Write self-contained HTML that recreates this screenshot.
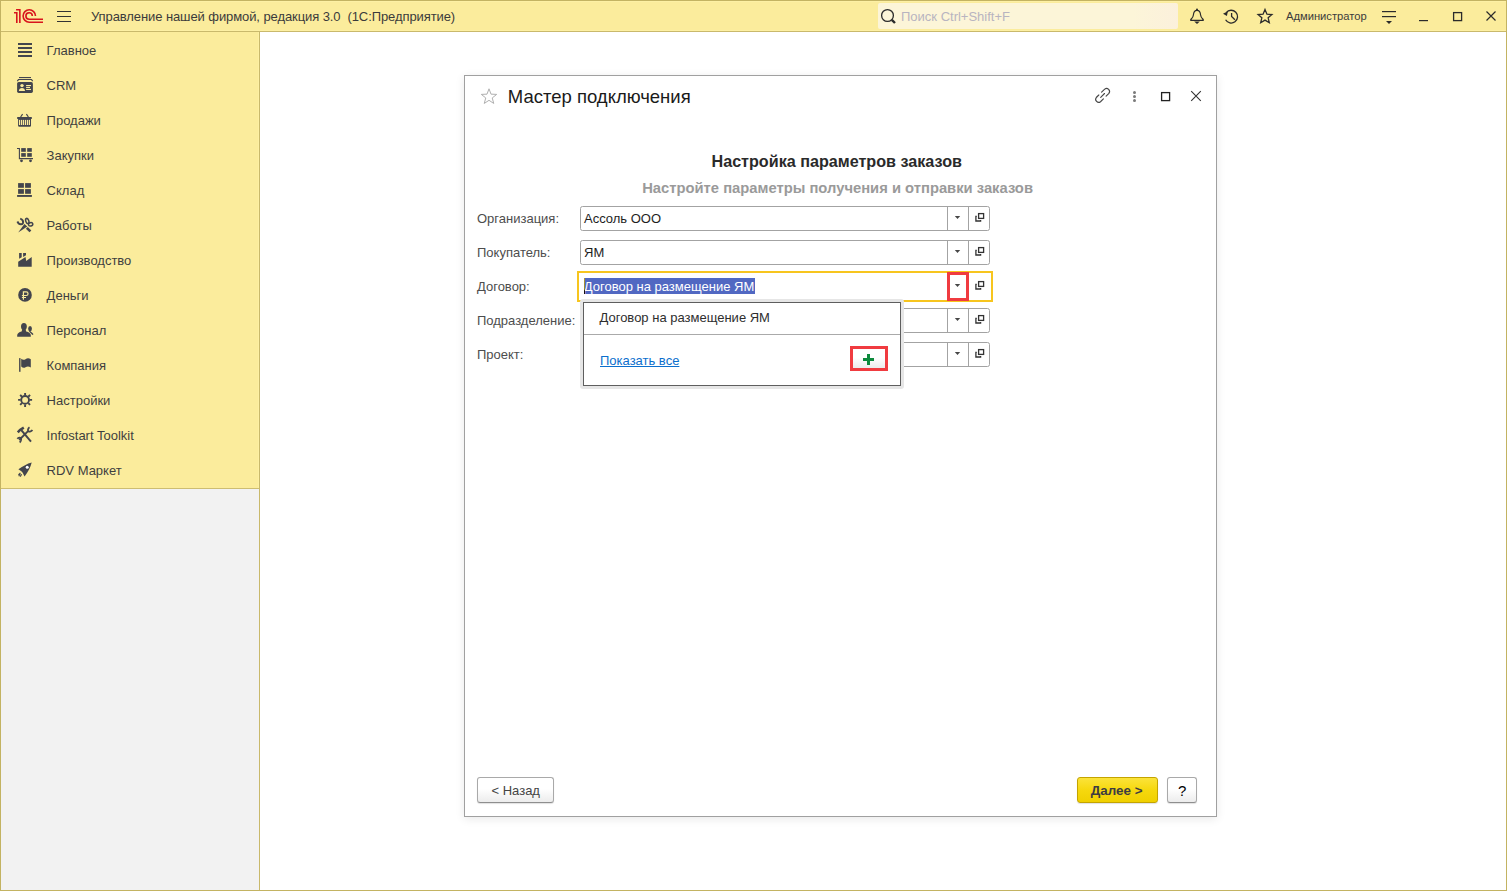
<!DOCTYPE html>
<html><head><meta charset="utf-8">
<style>
*{box-sizing:border-box;margin:0;padding:0}
html,body{width:1507px;height:891px;overflow:hidden;background:#fff}
body{font-family:"Liberation Sans",sans-serif;font-size:13px;color:#333;position:relative}
.abs{position:absolute}
.t{position:absolute;white-space:pre;line-height:15px}
#frame{position:absolute;left:0;top:0;width:1507px;height:891px;border:1px solid #c3b362;pointer-events:none;z-index:50}
#hdr{position:absolute;left:0;top:0;width:1507px;height:32px;background:#fbec9c;border-bottom:1px solid #c9b96c}
#side{position:absolute;left:0;top:32px;width:260px;height:859px;background:#f2f2f2;border-right:1px solid #c9b96c}
#sideY{position:absolute;left:0;top:0;width:259px;height:457px;background:#fbec9c;border-bottom:1px solid #cdbd72}
.si{position:absolute;left:46.6px;color:#3f3f3f;font-size:13px;line-height:15px;white-space:pre}
.ic{position:absolute;left:14px;width:22px;height:22px}
#dlg{position:absolute;left:464px;top:75px;width:753px;height:742px;background:#fff;border:1px solid #a0a0a0;box-shadow:0 2px 9px rgba(0,0,0,0.09)}
.lbl{position:absolute;left:477px;color:#4d4d4d;font-size:13px;line-height:15px;white-space:pre}
.inp{position:absolute;left:580px;width:410px;height:25px;border:1px solid #a3a3a3;border-radius:2.5px;background:#fff}
.inp .d1{position:absolute;left:366px;top:0;width:1px;height:23px;background:#a3a3a3}
.inp .d2{position:absolute;left:387px;top:0;width:1px;height:23px;background:#a3a3a3}
.arr{position:absolute;width:0;height:0;border-left:3px solid transparent;border-right:3px solid transparent;border-top:3px solid #4a4a4a}
.btn{position:absolute;height:26px;border:1px solid #a9a9a9;border-bottom-color:#8e8e8e;border-radius:3px;background:linear-gradient(#fff 0%,#fff 45%,#ececec 100%);box-shadow:0 1px 1px rgba(0,0,0,0.12)}
</style></head>
<body>
<div id="hdr"></div>
<!-- header content -->
<div class="abs" style="left:1px;top:1px;width:1505px;height:1px;background:#fdf0a4"></div>
<div class="abs" style="left:1px;top:30px;width:1505px;height:1px;background:#fdf0a4"></div>
<div class="abs" style="left:878px;top:3px;width:300px;height:26px;background:linear-gradient(90deg,#fcf5d8 0%,#fcf5d8 85%,#fbf0dc 100%);border-radius:2px"></div>
<div class="t" style="left:91px;top:9px;color:#3b3b3b;font-size:13px;letter-spacing:-0.09px">Управление нашей фирмой, редакция 3.0  (1С:Предприятие)</div>
<div class="t" style="left:901px;top:9px;color:#b8b4c0;font-size:13px">Поиск Ctrl+Shift+F</div>
<div class="t" style="left:1286px;top:9px;color:#3b3b3b;font-size:11.2px">Администратор</div>
<svg class="abs" style="left:0;top:0;z-index:5" width="1507" height="32" viewBox="0 0 1507 32">
 <g fill="none" stroke="#d8141c" stroke-width="1.6">
  <path d="M14,12.75 H16.8 V23"/>
  <path d="M16.05,9.75 H19.85 V23"/>
  <path d="M35.5,15.9 A6.2,6.2 0 1 0 29.3,22.2 H43"/>
  <path d="M32.34,15.9 A3.22,3.22 0 1 0 29.12,19.2 H43"/>
 </g>
 <g fill="#333">
  <rect x="57" y="11" width="14" height="1"/><rect x="57" y="16" width="14" height="1"/><rect x="57" y="21" width="14" height="1"/>
 </g>
 <g fill="none" stroke="#2b2b2b">
  <circle cx="887.5" cy="15.5" r="5.9" stroke-width="1.3"/>
  <path d="M891.8,19.8 L895,23" stroke-width="2.4"/>
 </g>
 <!-- bell -->
 <g stroke="#2b2b2b" stroke-width="1.2" fill="none">
  <path d="M1197,10.4 C1194.3,10.4 1193.6,12.5 1193.4,15 C1193.1,17.6 1191.6,18.6 1190.8,19.5 C1190.4,20 1190.7,20.4 1191.3,20.4 H1202.7 C1203.3,20.4 1203.6,20 1203.2,19.5 C1202.4,18.6 1200.9,17.6 1200.6,15 C1200.4,12.5 1199.7,10.4 1197,10.4 Z"/>
 </g>
 <g fill="#2b2b2b">
  <circle cx="1197" cy="9.6" r="1"/>
  <path d="M1194.2,21.6 H1199.8 L1197,23.9 Z"/>
 </g>
 <!-- history -->
 <g stroke="#2b2b2b" stroke-width="1.3" fill="none">
  <path d="M1225.6,19.8 A6.4,6.4 0 1 0 1226.2,12.6"/>
  <path d="M1231.6,13 V16.4 L1234.9,19.7"/>
 </g>
 <path d="M1223,13.7 L1227.9,11.2 L1226.9,16.1 Z" fill="#2b2b2b"/>
 <!-- star -->
 <path d="M1265.00,9.50 L1266.94,14.13 L1271.94,14.54 L1268.14,17.82 L1269.29,22.71 L1265.00,20.10 L1260.71,22.71 L1261.86,17.82 L1258.06,14.54 L1263.06,14.13 Z" fill="none" stroke="#2b2b2b" stroke-width="1.3" stroke-linejoin="miter"/>
 <!-- filter -->
 <g fill="#2b2b2b">
  <rect x="1382" y="11" width="14" height="1.2"/><rect x="1382" y="16" width="14" height="1.2"/>
  <path d="M1386,21 H1392 L1389,24 Z"/>
  <rect x="1419" y="20" width="9" height="1.2"/>
 </g>
 <rect x="1453.6" y="12.6" width="8" height="8" fill="none" stroke="#2b2b2b" stroke-width="1.3"/>
 <path d="M1486.5,11.5 L1495.5,20.5 M1495.5,11.5 L1486.5,20.5" stroke="#2b2b2b" stroke-width="1.2"/>
</svg>
<div id="side"><div id="sideY"></div></div>
<div class="abs" style="left:258px;top:32px;width:1px;height:456px;background:#fdf0a4"></div>
<div class="si" style="top:43px">Главное</div>
<div class="si" style="top:78px">CRM</div>
<div class="si" style="top:113px">Продажи</div>
<div class="si" style="top:148px">Закупки</div>
<div class="si" style="top:183px">Склад</div>
<div class="si" style="top:218px">Работы</div>
<div class="si" style="top:253px">Производство</div>
<div class="si" style="top:288px">Деньги</div>
<div class="si" style="top:323px">Персонал</div>
<div class="si" style="top:358px">Компания</div>
<div class="si" style="top:393px">Настройки</div>
<div class="si" style="top:428px">Infostart Toolkit</div>
<div class="si" style="top:463px">RDV Маркет</div>
<svg class="abs" style="left:0;top:0;z-index:5" width="40" height="490" viewBox="0 0 40 490">
 <g fill="#43454d">
  <!-- main -->
  <rect x="18" y="43" width="14" height="2"/><rect x="18" y="47" width="14" height="2"/><rect x="18" y="51" width="14" height="2"/><rect x="18" y="55" width="14" height="2"/>
  <!-- crm -->
  <rect x="19" y="77" width="12" height="1.1"/>
  <rect x="17.1" y="82.1" width="15.8" height="10.8" rx="1.6"/>
 </g>
 <path d="M17.3,81.1 L18.5,79.55 H31.5 L32.7,81.1" fill="none" stroke="#43454d" stroke-width="1.1"/>
 <g fill="#fbec9c">
  <circle cx="22" cy="85.6" r="1.7"/>
  <path d="M18.9,91 C18.9,89 20.3,87.9 22,87.9 C23.7,87.9 25,89 25,91 Z"/>
  <rect x="26.1" y="85" width="4.9" height="1.1"/><rect x="26.1" y="86.9" width="3.9" height="1.1"/><rect x="26.1" y="88.9" width="4.9" height="1.1"/>
 </g>
 <!-- basket -->
 <g fill="#43454d">
  <rect x="17.2" y="117" width="14.6" height="2"/>
  <path d="M18.1,119 H31 V125.6 Q31,126.8 29.8,126.8 H19.3 Q18.1,126.8 18.1,125.6 Z"/>
 </g>
 <g fill="#fbec9c">
  <rect x="19" y="119.9" width="1.2" height="5.1"/><rect x="21" y="119.9" width="1.2" height="5.1"/><rect x="22.9" y="119.9" width="1.2" height="5.1"/><rect x="24.9" y="119.9" width="1.2" height="5.1"/><rect x="26.9" y="119.9" width="1.2" height="5.1"/><rect x="28.8" y="119.9" width="1.2" height="5.1"/>
 </g>
 <path d="M20.6,117 L22.6,114.2 M26.4,114.2 L28.4,117" stroke="#43454d" stroke-width="1.2" fill="none"/>
 <!-- cart -->
 <path d="M17,148.5 H19.4 V158.6 H33" fill="none" stroke="#43454d" stroke-width="1.1"/>
 <g fill="#43454d">
  <rect x="21.2" y="148.1" width="4.6" height="3.7"/><rect x="27.2" y="148.1" width="4.6" height="3.7"/>
  <rect x="21.2" y="153.1" width="4.6" height="3.7"/><rect x="27.2" y="153.1" width="4.6" height="3.7"/>
  <circle cx="21.5" cy="160.8" r="1.4"/><circle cx="30.5" cy="160.8" r="1.4"/>
 </g>
 <!-- sklad -->
 <g fill="#43454d">
  <rect x="18.1" y="183.1" width="5.8" height="4.7"/><rect x="25.1" y="183.1" width="5.8" height="4.7"/>
  <rect x="18.1" y="189.1" width="5.8" height="4.7"/><rect x="25.1" y="189.1" width="5.8" height="4.7"/>
  <rect x="17.1" y="195" width="14.8" height="1.9"/>
 </g>
 <!-- raboty -->
 <g fill="none" stroke="#43454d" stroke-width="2">
  <path d="M20.2,218.6 C22.6,219.4 23.6,221.5 22.9,223.2 C22.1,224.6 19.8,224.5 18.4,223.2 L17.4,221.4"/>
 </g>
 <g fill="none" stroke="#43454d" stroke-width="1.5">
  <ellipse cx="27.3" cy="220.9" rx="1.5" ry="2.6" transform="rotate(-20 27.3 220.9)"/>
  <ellipse cx="30.6" cy="224.3" rx="2.2" ry="1.7" transform="rotate(-15 30.6 224.3)"/>
  <path d="M26.8,227.8 L30.4,231.4" stroke-width="2.6"/>
 </g>
 <path d="M24.4,224.1 L27.3,226.6 L18.2,232.5 Z" fill="#43454d"/>
 <!-- proizvodstvo -->
 <g fill="#43454d">
  <path d="M19.1,253.1 H21.7 V257.3 L19.1,258.8 Z"/>
  <path d="M23.1,253.1 H26 V255.2 L23.1,256.9 Z"/>
  <path d="M18.2,261.8 L25.5,257.1 L26.2,261.1 L31.7,257.1 V266.7 H18.2 Z"/>
 </g>
 <!-- dengi -->
 <circle cx="25" cy="294.9" r="6.8" fill="#43454d"/>
 <path d="M23.4,299.8 V291.8 H26.2 A1.85,1.85 0 0 1 26.2,295.5 H21.9 M21.9,297.5 H26" fill="none" stroke="#fbec9c" stroke-width="1.2"/>
 <!-- personal -->
 <g fill="#43454d">
  <ellipse cx="23.9" cy="326.5" rx="2.9" ry="3.5"/>
  <path d="M22.3,329 H25.5 L26.2,331.6 C29,332.3 30.8,333.4 30.8,335.2 V336.7 H17.2 V335.2 C17.2,333.4 19,332.3 21.6,331.6 Z"/>
  <ellipse cx="30.05" cy="328.7" rx="1.9" ry="2.65"/>
 </g>
 <path d="M29.6,331 C30.2,332.4 32,333 32.9,334.6" fill="none" stroke="#43454d" stroke-width="1.4"/>
 <!-- kompaniya -->
 <g fill="#43454d">
  <rect x="19.1" y="358.1" width="1.4" height="13.7"/>
  <path d="M21.2,358.8 Q23.3,360.6 25.5,359.2 Q28,357.4 30.8,359.2 V367.5 Q28,365.8 25.5,367.3 Q23.3,368.6 21.2,366.6 Z"/>
 </g>
 <!-- nastroiki -->
 <circle cx="25.1" cy="399.9" r="3.9" fill="none" stroke="#43454d" stroke-width="1.9"/>
 <path d="M29.60,399.90 L32.10,399.90 M28.28,403.08 L30.05,404.85 M25.10,404.40 L25.10,406.90 M21.92,403.08 L20.15,404.85 M20.60,399.90 L18.10,399.90 M21.92,396.72 L20.15,394.95 M25.10,395.40 L25.10,392.90 M28.28,396.72 L30.05,394.95" stroke="#43454d" stroke-width="1.9"/>
 <!-- toolkit -->
 <g fill="none" stroke="#43454d" stroke-width="1.8">
  <path d="M21.3,430.2 L31,441.6" stroke-width="2"/>
  <path d="M17.8,432.4 L20,429.9 L23.8,427.6" stroke-width="2.5"/>
  <path d="M19.2,440 L28,431.2"/>
  <path d="M29.5,427.3 C27.8,428.4 27.6,430.6 28.4,431.2 C29.4,432 31.6,431.5 32.3,429.9"/>
  <path d="M17.3,438.8 C18.6,437.2 20.4,437.2 20.9,438.3 C21.5,439.6 20.8,441.7 19.6,442.4"/>
 </g>
 <!-- rdv -->
 <path d="M31.7,462.4 C27,463.6 23.2,466 18.4,469.3 L21.3,471.3 L22.5,472.5 L24.6,476.4 C28.1,471.6 30.6,467.2 31.7,462.4 Z" fill="#43454d"/>
 <circle cx="27.2" cy="467.3" r="1.5" fill="#fff"/>
 <path d="M18.8,476.3 L20.2,473.4 M20.2,476.6 L21.6,474.2 M18.4,474.8 L20.4,472.8" stroke="#43454d" stroke-width="1.1"/>
</svg>
<div id="dlg"></div>
<!-- dialog header -->
<div class="t" style="left:507.8px;top:85.6px;font-size:18.5px;line-height:22px;color:#1a1a1a">Мастер подключения</div>
<svg class="abs" style="left:460px;top:80px;z-index:5" width="760" height="30" viewBox="460 80 760 30">
 <path d="M489.00,88.80 L491.00,94.15 L496.70,94.40 L492.23,97.95 L493.76,103.45 L489.00,100.30 L484.24,103.45 L485.77,97.95 L481.30,94.40 L487.00,94.15 Z" fill="none" stroke="#b0b0b0" stroke-width="1"/>
 <g fill="none" stroke="#474747" stroke-width="1.15" stroke-linecap="round">
  <path d="M1101.6,92.2 L1104.7,89.1 A3,3 0 0 1 1108.9,93.3 L1106.1,96.1"/>
  <path d="M1103.4,98.8 L1100.5,101.7 A3,3 0 0 1 1096.3,97.5 L1098.8,95"/>
  <path d="M1100.7,97.3 L1104.5,93.5"/>
 </g>
 <g fill="#7a7a7a"><circle cx="1134.5" cy="92.6" r="1.5"/><circle cx="1134.5" cy="96.6" r="1.5"/><circle cx="1134.5" cy="100.5" r="1.5"/></g>
 <rect x="1161.6" y="92.6" width="8" height="8" fill="none" stroke="#222" stroke-width="1.3"/>
 <path d="M1191.2,91.2 L1200.8,100.8 M1200.8,91.2 L1191.2,100.8" stroke="#333" stroke-width="1.1"/>
</svg>
<div class="t" style="left:711.5px;top:152.2px;font-size:16.15px;line-height:18px;font-weight:bold;color:#2a2a2a">Настройка параметров заказов</div>
<div class="t" style="left:642.2px;top:180.2px;font-size:14.78px;line-height:17px;font-weight:bold;color:#9a9a9a">Настройте параметры получения и отправки заказов</div>
<!-- labels -->
<div class="lbl" style="top:211px">Организация:</div>
<div class="lbl" style="top:245px">Покупатель:</div>
<div class="lbl" style="top:279px">Договор:</div>
<div class="lbl" style="top:313px">Подразделение:</div>
<div class="lbl" style="top:347px">Проект:</div>
<!-- inputs -->
<div class="inp" style="top:206px"><div class="d1"></div><div class="d2"></div></div>
<div class="inp" style="top:240px"><div class="d1"></div><div class="d2"></div></div>
<div class="inp" style="top:308px"><div class="d1"></div><div class="d2"></div></div>
<div class="inp" style="top:342px"><div class="d1"></div><div class="d2"></div></div>
<div class="abs" style="left:577px;top:271px;width:416px;height:31px;border:2px solid #f7c51e;background:#fff"></div>
<div class="t" style="left:584px;top:211px;color:#1e1e1e">Ассоль ООО</div>
<div class="t" style="left:584px;top:245px;color:#1e1e1e">ЯМ</div>
<div class="abs" style="left:585px;top:278px;width:170px;height:16px;background:#5168c2"></div>
<div class="t" style="left:583.8px;top:279px;color:#fff">Договор на размещение ЯМ</div>
<div class="abs" style="left:584px;top:278px;width:1px;height:16px;background:linear-gradient(#b09a3c 0%,#9a8430 70%,#111 80%,#111 100%)"></div>
<svg class="abs" style="left:940px;top:200px;z-index:5" width="60" height="180" viewBox="940 200 60 180">
 <defs>
  <g id="ddi">
   <path d="M954.8,216 H960.2 L957.5,219 Z" fill="#474747"/>
   <rect x="978.6" y="213.6" width="5" height="4.8" fill="none" stroke="#333" stroke-width="1.3"/>
   <path d="M976.8,216.4 H975.9 V221 H980.6 V220.1" fill="none" stroke="#333" stroke-width="1.3"/>
  </g>
 </defs>
 <use href="#ddi"/>
 <use href="#ddi" transform="translate(0,34)"/>
 <use href="#ddi" transform="translate(0,68)"/>
 <use href="#ddi" transform="translate(0,102)"/>
 <use href="#ddi" transform="translate(0,136)"/>
 <rect x="948.5" y="273.5" width="19" height="26" fill="none" stroke="#f03b40" stroke-width="3"/>
</svg>
<!-- popup -->
<div class="abs" style="left:580px;top:299px;width:324px;height:90px;background:#e6e6e6;border-radius:3px;z-index:6"></div>
<div class="abs" style="left:583px;top:302px;width:318px;height:84px;border:1px solid #5e5e5e;background:#fff;z-index:6">
 <div class="abs" style="left:0;top:31px;width:316px;height:1px;background:#aaa"></div>
</div>
<div class="t" style="left:599.5px;top:310px;color:#2e2e2e;z-index:7">Договор на размещение ЯМ</div>
<div class="t" style="left:600px;top:353px;color:#0c6fcd;text-decoration:underline;z-index:7">Показать все</div>
<div class="abs" style="left:853px;top:349px;width:32px;height:19px;background:linear-gradient(#fff 0%,#fff 45%,#ececec 100%);z-index:7"></div>
<div class="abs" style="left:850px;top:346px;width:38px;height:25px;border:3px solid #f03b40;z-index:8"></div>
<svg class="abs" style="left:860px;top:351px;z-index:9" width="18" height="18" viewBox="860 351 18 18">
 <path d="M867,354 H870 V358 H874 V361 H870 V365 H867 V361 H863 V358 H867 Z" fill="#0c8a3c"/>
</svg>
<!-- buttons -->
<div class="btn" style="left:477px;top:777px;width:77px"></div>
<div class="t" style="left:491.5px;top:783px;color:#444">&lt; Назад</div>
<div class="abs" style="left:1077px;top:777px;width:81px;height:26px;border:1px solid #c4a400;border-radius:3px;background:linear-gradient(#fbe33a 0%,#f6d80e 50%,#f0d000 100%);box-shadow:0 1px 1px rgba(0,0,0,0.12)"></div>
<div class="t" style="left:1090.8px;top:782.7px;color:#3d3d42;font-weight:bold;font-size:13.4px">Далее &gt;</div>
<div class="btn" style="left:1167px;top:777px;width:30px"></div>
<div class="t" style="left:1178px;top:782.8px;color:#000;font-size:15px">?</div>
<div id="frame"></div>
</body></html>
